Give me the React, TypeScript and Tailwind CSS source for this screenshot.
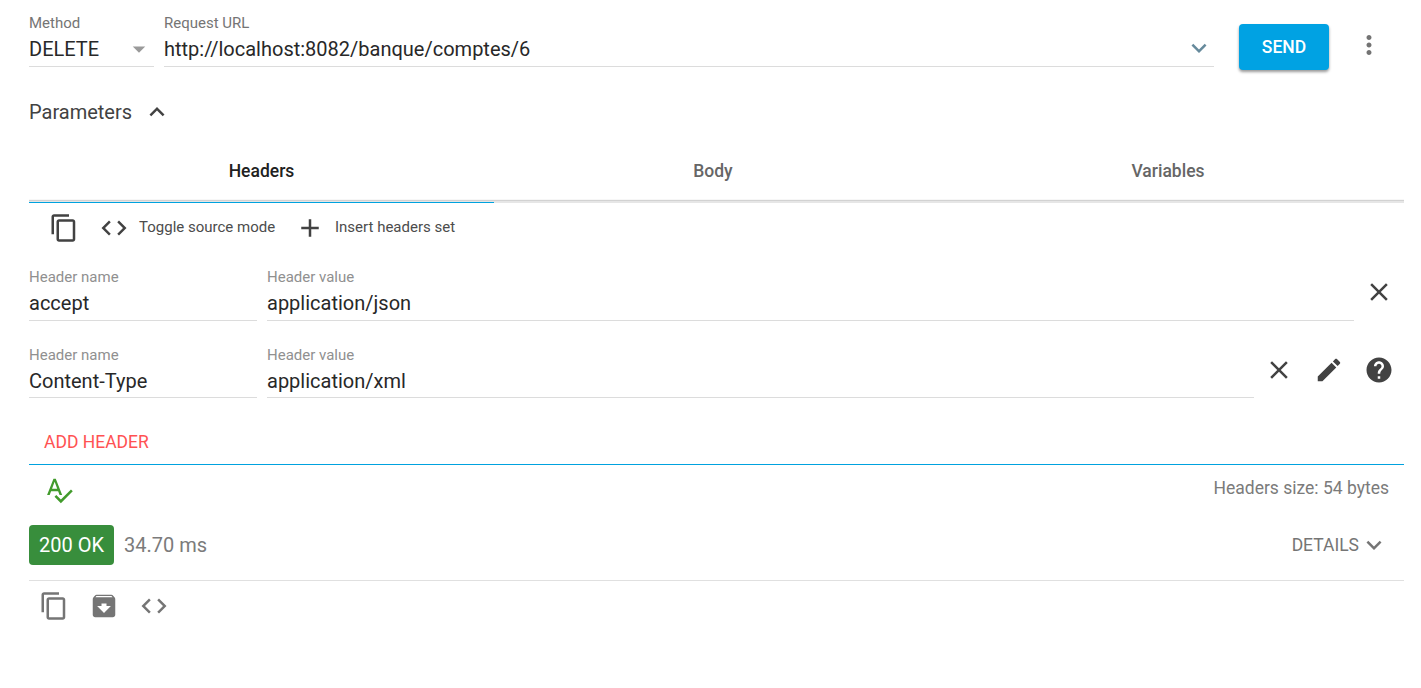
import React, { type ReactNode } from 'react';

const paths = {
  dropDown: 'M7 10l5 5 5-5z',
  expandMore: 'M16.59 8.59L12 13.17 7.41 8.59 6 10l6 6 6-6z',
  expandLess: 'M12 8l-6 6 1.41 1.41L12 10.83l4.59 4.58L18 14z',
  moreVert:
    'M12 8c1.1 0 2-.9 2-2s-.9-2-2-2-2 .9-2 2 .9 2 2 2zm0 2c-1.1 0-2 .9-2 2s.9 2 2 2 2-.9 2-2-.9-2-2-2zm0 6c-1.1 0-2 .9-2 2s.9 2 2 2 2-.9 2-2-.9-2-2-2z',
  copy: 'M16 1H4c-1.1 0-2 .9-2 2v14h2V3h12V1zm3 4H8c-1.1 0-2 .9-2 2v14c0 1.1.9 2 2 2h11c1.1 0 2-.9 2-2V7c0-1.1-.9-2-2-2zm0 16H8V7h11v14z',
  code: 'M9.4 16.6L4.8 12l4.6-4.6L8 6l-6 6 6 6 1.4-1.4zm5.2 0l4.6-4.6-4.6-4.6L16 6l6 6-6 6-1.4-1.4z',
  add: 'M19 13h-6v6h-2v-6H5v-2h6V5h2v6h6v2z',
  close:
    'M19 6.41L17.59 5 12 10.59 6.41 5 5 6.41 10.59 12 5 17.59 6.41 19 12 13.41 17.59 19 19 17.59 13.41 12z',
  edit: 'M3 17.25V21h3.75L17.81 9.94l-3.75-3.75L3 17.25zM20.71 7.04c.39-.39.39-1.02 0-1.41l-2.34-2.34c-.39-.39-1.02-.39-1.41 0l-1.83 1.83 3.75 3.75 1.83-1.83z',
  help: 'M12 2C6.48 2 2 6.48 2 12s4.48 10 10 10 10-4.48 10-10S17.52 2 12 2zm1 17h-2v-2h2v2zm2.07-7.75l-.9.92C13.45 12.9 13 13.5 13 15h-2v-.5c0-1.1.45-2.1 1.17-2.83l1.24-1.26c.37-.36.59-.86.59-1.41 0-1.1-.9-2-2-2s-2 .9-2 2H8c0-2.21 1.79-4 4-4s4 1.79 4 4c0 .88-.36 1.68-.93 2.25z',
  spellcheck:
    'M12.45 16h2.09L9.43 3H7.57L2.46 16h2.09l1.12-3h5.64l1.14 3zm-6.02-5L8.5 5.48 10.57 11H6.43zm15.16.59l-8.09 8.09L9.83 16l-1.41 1.41 5.09 5.09L23 13l-1.41-1.41z',
  archive:
    'M20.54 5.23l-1.39-1.68C18.88 3.21 18.47 3 18 3H6c-.47 0-.88.21-1.16.55L3.46 5.23C3.17 5.57 3 6.02 3 6.5V19c0 1.1.9 2 2 2h14c1.1 0 2-.9 2-2V6.5c0-.48-.17-.93-.46-1.27zM12 17.5L6.5 12H10v-2h4v2h3.5L12 17.5zM5.12 5l.81-1h12l.94 1H5.12z',
};

function Icon({ name, className = '' }: { name: keyof typeof paths; className?: string }) {
  return (
    <svg viewBox="0 0 24 24" fill="currentColor" className={`size-[30px] shrink-0 ${className}`}>
      <path d={paths[name]} />
    </svg>
  );
}

function Field({ label, value, className, labelClass, inputClass = 'h-[35px]', children }: {
  label: string;
  value: string;
  className: string;
  labelClass: string;
  inputClass?: string;
  children?: ReactNode;
}) {
  return (
    <div className={`flex flex-col border-b border-[#dcdcdc] ${className}`}>
      <span className={`h-4 text-[15px] leading-4 ${labelClass}`}>{label}</span>
      <div className={`flex items-start justify-between ${inputClass}`}>
        <span className="pt-[3px] text-xl leading-[30px] text-[#282828]">{value}</span>
        {children}
      </div>
    </div>
  );
}

export default function App() {
  return (
    <div className="h-[688px] w-full overflow-hidden bg-white pl-[29px] pr-[17px] font-['Roboto',sans-serif] text-[#424242]">
      <div className="flex h-[82px] items-start">
        <Field label="Method" value="DELETE" className="mt-[15px] w-[125px]" labelClass="text-[#757575]">
          <Icon name="dropDown" className="mt-[3px] text-[#9a9a9a]" />
        </Field>
        <Field label="Request URL" value="http://localhost:8082/banque/comptes/6" className="ml-2.5 mt-[15px] grow" labelClass="text-[#757575]">
          <Icon name="expandMore" className="mt-0.5 text-[#668a9c]" />
        </Field>
        <button className="ml-[25px] mt-6 h-[46px] w-[90px] rounded bg-[#00a2e3] text-[17.5px] font-medium text-white shadow-[0_2px_3px_rgba(0,0,0,0.4)]">
          SEND
        </button>
        <Icon name="moreVert" className="ml-[25px] mr-5 mt-[30px] text-[#737373]" />
      </div>

      <div className="flex h-[60px] items-center gap-2.5">
        <span className="text-xl">Parameters</span>
        <Icon name="expandLess" />
      </div>

      <div className="flex h-[61px] border-b-2 border-[#e6e6e6] text-[17.5px] font-medium text-[#666666] shadow-[inset_0_-1px_0_#d2d2d2,inset_0_-2px_0_#f7f7f7]">
        <div className="-mb-0.5 w-[465px] border-b border-[#00a2df] pt-4 text-center text-[#212121]">Headers</div>
        <div className="w-[438px] pt-4 text-center">Body</div>
        <div className="grow pt-4 text-center">Variables</div>
      </div>

      <div className="flex h-[50px] items-center pl-5 text-[15px]">
        <Icon name="copy" />
        <Icon name="code" className="ml-5" />
        <span className="ml-2.5 w-[136px] whitespace-nowrap pb-0.5 text-[#4c4c4c]">Toggle source mode</span>
        <Icon name="add" className="ml-5" />
        <span className="ml-2.5 pb-0.5 text-[#4c4c4c]">Insert headers set</span>
      </div>

      <div className="flex h-[78px] items-start pt-4">
        <Field label="Header name" value="accept" className="w-[228px]" labelClass="text-[#909090]" />
        <Field label="Header value" value="application/json" className="ml-2.5 grow" labelClass="text-[#909090]" />
        <Icon name="close" className="ml-2.5 mr-2.5 mt-2" />
      </div>
      <div className="flex h-[78px] items-start pt-4">
        <Field label="Header name" value="Content-Type" className="w-[228px]" labelClass="text-[#909090]" inputClass="h-[34px]" />
        <Field label="Header value" value="application/xml" className="ml-2.5 grow" labelClass="text-[#909090]" inputClass="h-[34px]" />
        <div className="ml-2.5 mr-2.5 mt-2 flex gap-5">
          <Icon name="close" />
          <Icon name="edit" />
          <Icon name="help" />
        </div>
      </div>

      <div className="flex h-[56px] items-center border-b border-[#00a2df] pl-[15px] pt-3 text-[17.5px] text-[#ff5252]">
        ADD HEADER
      </div>

      <div className="flex h-[60px] items-start justify-between px-[15px] pt-2.5">
        <Icon name="spellcheck" className="text-[#429b2c]" />
        <span className="text-[17.5px] leading-[26px] text-[#7b7b7b]">Headers size: 54 bytes</span>
      </div>

      <div className="flex h-[56px] items-start border-b border-[#e0e0e0]">
        <div className="flex h-10 w-[85px] items-center justify-center rounded-sm bg-[#388e3c] text-xl text-white">200 OK</div>
        <span className="ml-2.5 text-xl leading-10 text-[#7b7b7b]">34.70 ms</span>
        <div className="ml-auto mr-[15px] flex h-10 items-center text-[17.5px] text-[#757575]">
          DETAILS
          <Icon name="expandMore" />
        </div>
      </div>

      <div className="flex gap-5 pl-2.5 pt-2.5 text-[#757575]">
        <Icon name="copy" />
        <Icon name="archive" />
        <Icon name="code" />
      </div>
    </div>
  );
}
